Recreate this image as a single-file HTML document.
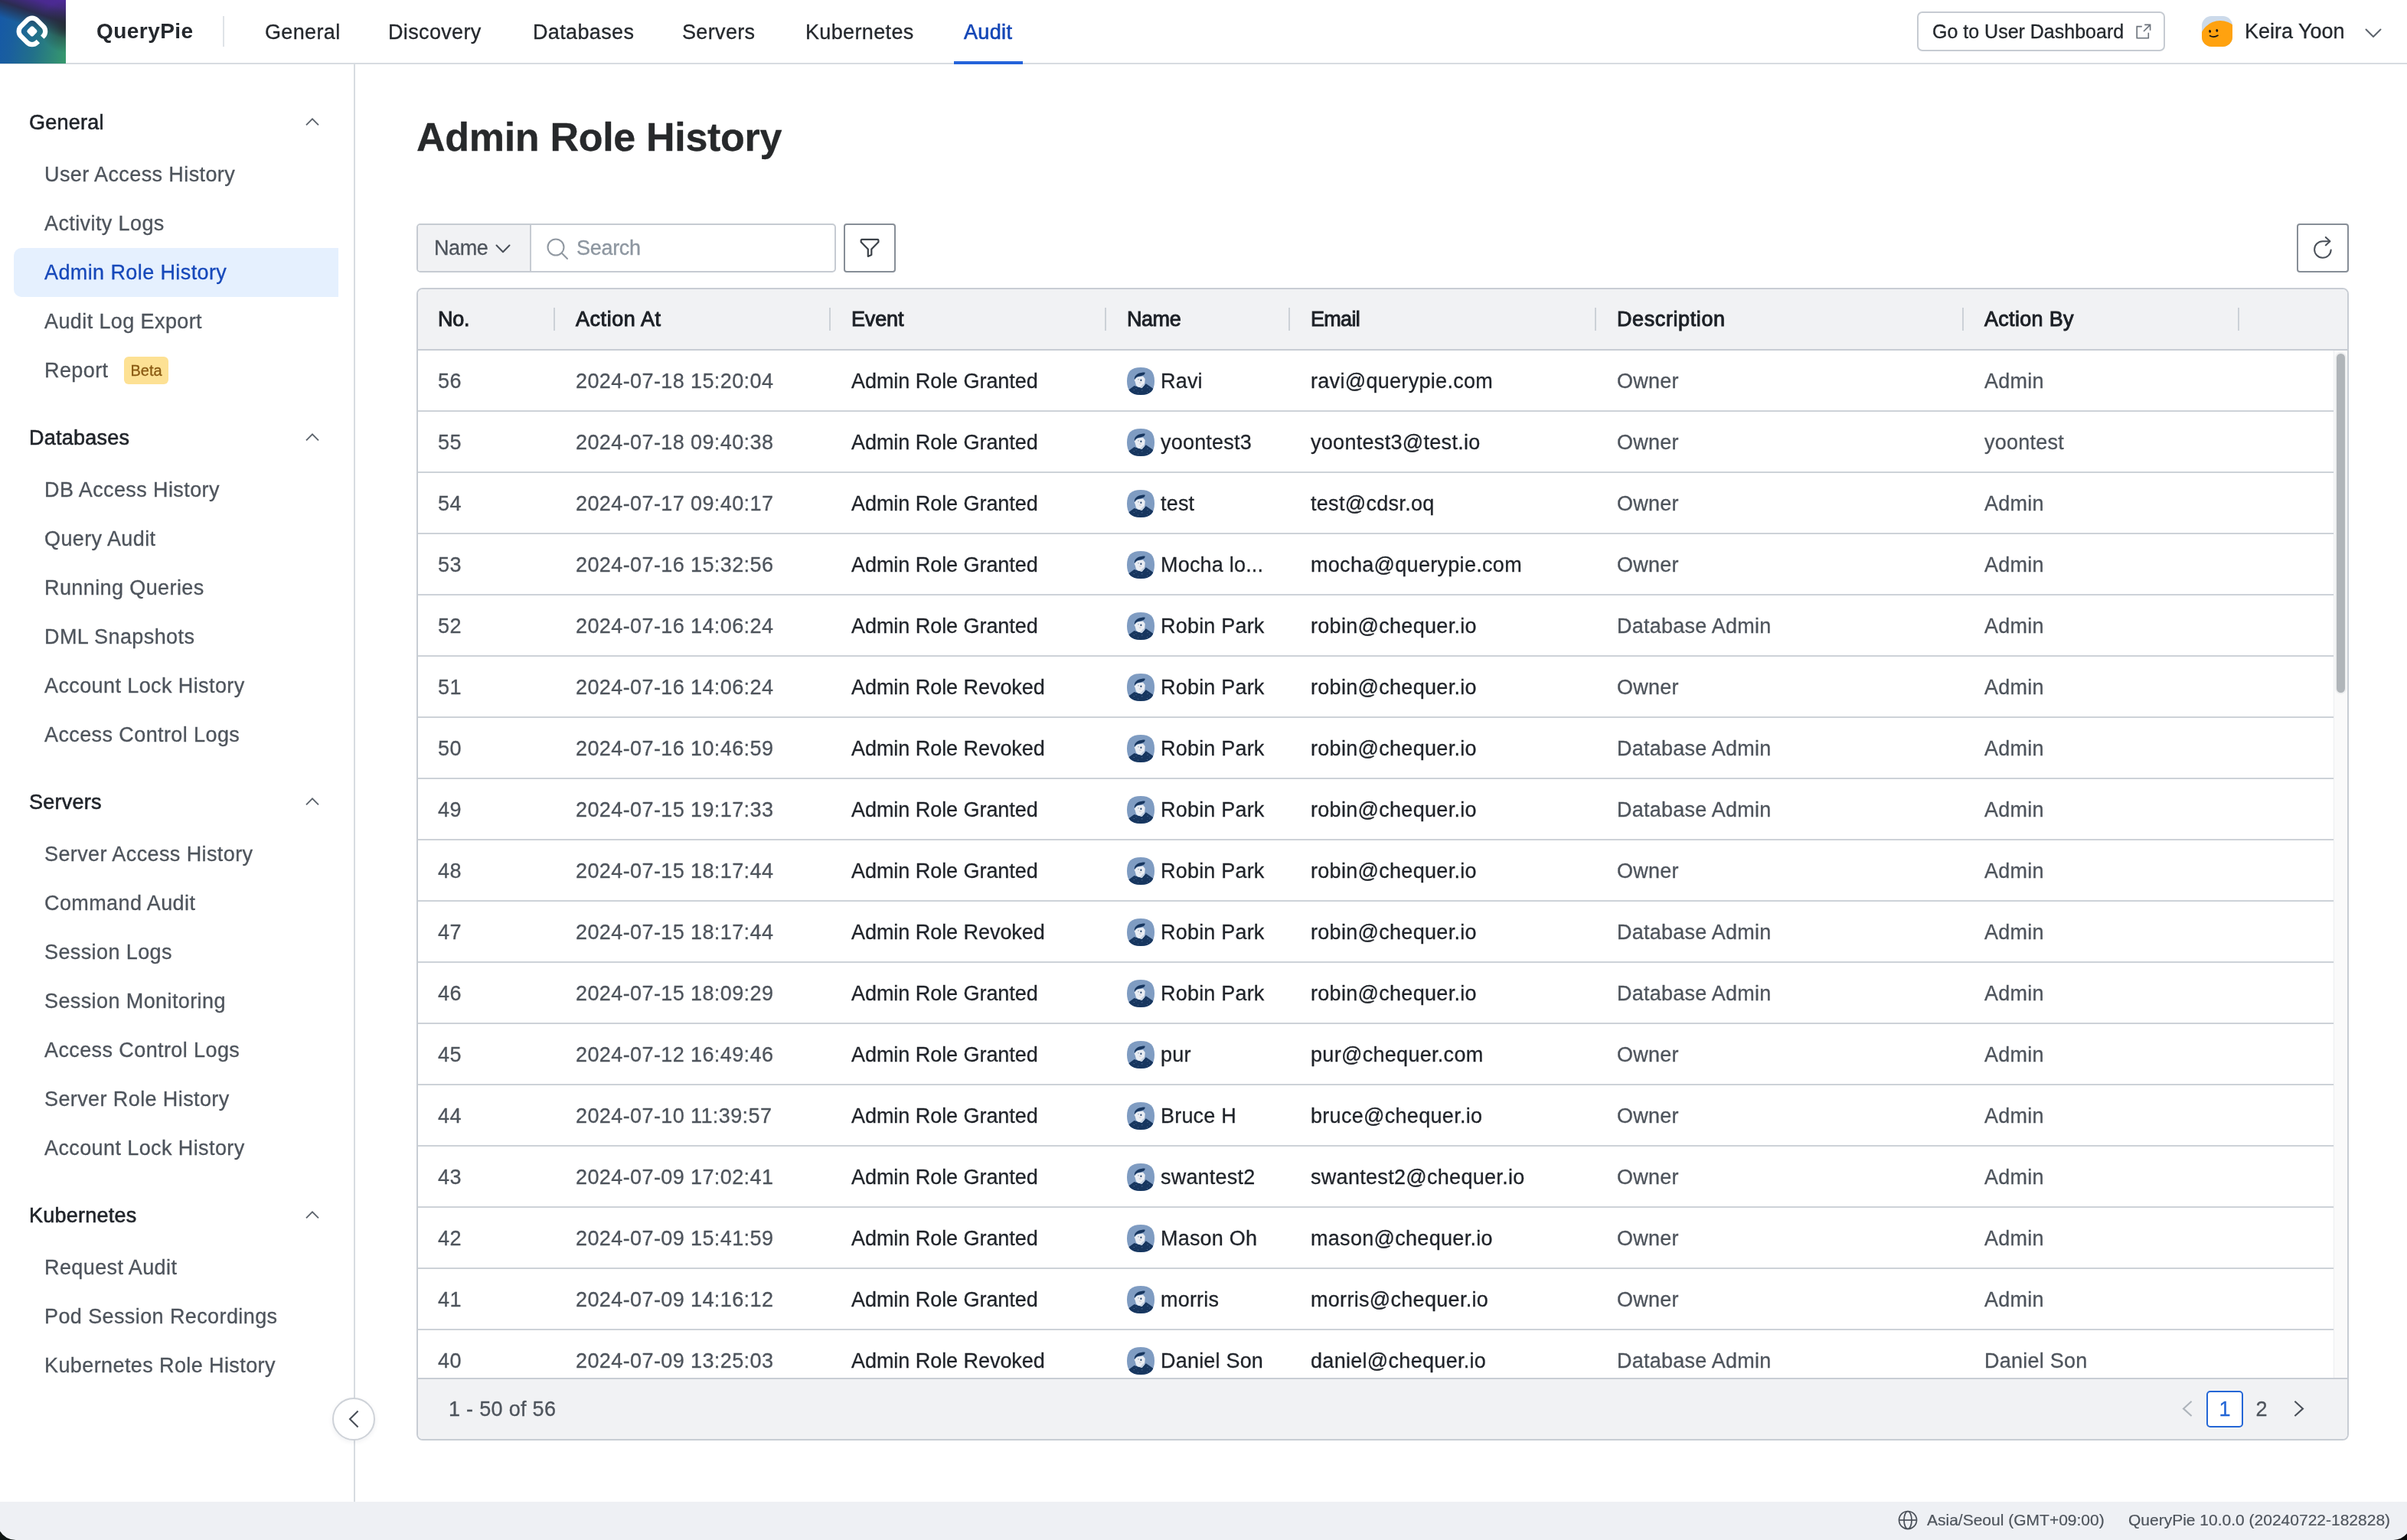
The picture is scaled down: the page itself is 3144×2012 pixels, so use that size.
<!DOCTYPE html>
<html lang="en"><head><meta charset="utf-8"><title>QueryPie - Admin Role History</title>
<style>
*{box-sizing:border-box;margin:0;padding:0}
html,body{width:3144px;height:2012px;overflow:hidden;background:#fff}
body{position:relative;font-family:"Liberation Sans",Arial,sans-serif;font-size:27px;color:#1f2329;-webkit-font-smoothing:antialiased;-webkit-text-stroke:.3px}
.abs{position:absolute}
svg{display:block}
/* header */
#app{position:absolute;left:0;top:0;width:3144px;height:2012px;will-change:transform}
#hdr{position:absolute;left:0;top:0;width:3144px;height:84px;border-bottom:2px solid #d7dce1;background:#fff}
#logo{position:absolute;left:0;top:0;width:86px;height:83px;background:radial-gradient(circle at 100% 42%,rgba(36,44,48,.85) 0,rgba(36,44,48,.45) 14px,rgba(36,44,48,0) 34px),linear-gradient(199deg,#4e2a98 0%,#4a2a90 11%,#2b2c50 27%,rgba(38,48,80,.75) 33%,rgba(30,70,120,0) 46%),linear-gradient(100deg,#1558a8 0%,#1a5f9e 25%,#22708a 55%,#37996c 100%)}
#brand{position:absolute;left:126px;top:0;height:82px;line-height:82px;font-size:28px;font-weight:700;color:#24282d;letter-spacing:.45px;-webkit-text-stroke:0}
#vdiv{position:absolute;left:291px;top:21px;width:2px;height:40px;background:#dfe3e8}
.nav{position:absolute;top:0;height:82px;line-height:84px;font-size:27px;color:#24282d;letter-spacing:.35px;white-space:nowrap}
.nav.on{color:#1346b6;-webkit-text-stroke:.6px #1346b6}
#uline{position:absolute;left:1246px;top:80px;width:90px;height:4px;background:#2463da}
#dash{position:absolute;left:2504px;top:15px;width:324px;height:52px;border:2px solid #c6cbd2;border-radius:7px;background:#fff}
#dash span{position:absolute;left:18px;top:0;line-height:48px;font-size:25px;letter-spacing:0;color:#24282d;white-space:nowrap}
#uname{position:absolute;left:2932px;top:0;line-height:83px;font-size:27px;letter-spacing:0;color:#24282d;white-space:nowrap}
/* sidebar */
#side{position:absolute;left:0;top:84px;width:464px;height:1878px;border-right:2px solid #d7dce1;background:#fff}
.sh{position:absolute;left:38px;height:72px;line-height:72px;font-size:27px;color:#1f2329;letter-spacing:.25px;-webkit-text-stroke:.6px #1f2329;white-space:nowrap}
.si{position:absolute;left:18px;width:424px;height:64px;line-height:64px;padding-left:40px;font-size:27px;color:#4e545c;letter-spacing:.4px;white-space:nowrap;border-radius:10px 0 0 10px}
.si.on{background:#e5f0fe;color:#1648ba}
.chev{position:absolute;left:398px}
#beta{position:absolute;left:162px;top:382px;width:58px;height:36px;border-radius:6px;background:#fde194;color:#8a5a12;font-size:20px;line-height:36px;text-align:center;letter-spacing:0}
#collapse{position:absolute;left:434px;top:1826px;width:56px;height:56px;border-radius:50%;border:2px solid #ced2d8;background:#fff;box-shadow:0 2px 6px rgba(20,30,50,.07)}
/* main */
#title{position:absolute;left:544px;top:147px;line-height:64px;font-size:52px;font-weight:700;color:#27292b;letter-spacing:-.3px;white-space:nowrap}
#srch{position:absolute;left:544px;top:292px;width:548px;height:64px;border:2px solid #c6cbd2;border-radius:5px;background:#fff;overflow:hidden}
#srch .sel{position:absolute;left:0;top:0;width:148px;height:60px;background:#f1f2f4;border-right:2px solid #c6cbd2}
#srch .sel span{position:absolute;left:21px;top:0;line-height:60px;font-size:27px;color:#4e545c;letter-spacing:-.4px}
#srch .ph{position:absolute;left:207px;top:0;line-height:60px;font-size:27px;color:#8d96a0;letter-spacing:-.3px}
.ibtn{position:absolute;top:292px;width:68px;height:64px;border:2px solid #878e97;border-radius:4px;background:#fff}
/* table */
#tbl{position:absolute;left:544px;top:376px;width:2524px;height:1506px;border:2px solid #c8cdd4;border-radius:8px;background:#fff;overflow:hidden}
#th{position:absolute;left:0;top:0;width:2520px;height:80px;background:#f1f2f4;border-bottom:2px solid #c8cdd4}
.hc{position:absolute;top:0;line-height:78px;font-size:27px;font-weight:400;color:#1c2026;letter-spacing:.15px;-webkit-text-stroke:.95px #1c2026;white-space:nowrap}
.hs{position:absolute;top:24px;width:2px;height:30px;background:#ccd1d7}
.tr{position:absolute;left:0;width:2502px;height:80px;border-bottom:2px solid #cdd2d8}
.tr span{position:absolute;top:0;line-height:80px;white-space:nowrap;font-size:27px}
.c1{left:26px;color:#4e545c;letter-spacing:.4px}
.c2{left:206px;color:#4e545c;letter-spacing:.4px}
.c3{left:566px;color:#1f2329;letter-spacing:-.05px}
.c4{left:970px;color:#1f2329;letter-spacing:.2px}
.c5{left:1166px;color:#1f2329;letter-spacing:.3px}
.c6{left:1566px;color:#4e545c;letter-spacing:.25px}
.c7{left:2046px;color:#4e545c;letter-spacing:.25px}
.av{position:absolute;left:926px;top:22px}
#sbar{position:absolute;left:2502px;top:80px;width:18px;height:1344px;background:#fafafa;border-left:1px solid #eceef0}
#thumb{position:absolute;left:3px;top:4px;width:11px;height:443px;border-radius:6px;background:#b0b5b9;box-shadow:0 0 0 2px #eeeff0}
#tf{position:absolute;left:0;top:1422px;width:2520px;height:80px;background:#f1f2f4;border-top:2px solid #c8cdd4}
#tf .cnt{position:absolute;left:40px;top:0;line-height:79px;font-size:27px;color:#4e545c;letter-spacing:.3px;white-space:nowrap}
#pg1{position:absolute;left:2336px;top:15px;width:48px;height:48px;border:2px solid #2466d6;border-radius:5px;background:#fff;color:#2466d6;text-align:center;line-height:45px;font-size:27px}
#pg2{position:absolute;left:2384px;top:15px;width:48px;height:48px;color:#4e545c;text-align:center;line-height:49px;font-size:27px}
/* status bar */
#stat{position:absolute;left:0;top:1962px;width:3144px;height:50px;background:#eef0f4}
#stat span{position:absolute;top:0;line-height:48px;font-size:21px;color:#4e545c;letter-spacing:0;-webkit-text-stroke:.2px;white-space:nowrap}
.corner{position:absolute;top:1996px;width:24px;height:16px}
</style></head><body><div id="app">
<svg width="0" height="0" style="position:absolute"><defs><clipPath id="sq"><path d="M18 0C30.5 0 36 5.5 36 18S30.5 36 18 36 0 30.5 0 18 5.5 0 18 0Z"/></clipPath><clipPath id="sq40"><rect width="40" height="40" rx="12.5"/></clipPath></defs></svg>

<div id="hdr">
<div id="logo"><svg width="86" height="83" viewBox="0 0 86 83"><g transform="translate(41.9 40.9) rotate(45)" fill="none" stroke="#fff" stroke-width="6.2"><path d="M14.85 3.6 V5.85 A9 9 0 0 1 5.85 14.85 H-5.85 A9 9 0 0 1 -14.85 5.85 V-5.85 A9 9 0 0 1 -5.85 -14.85 H5.85 A9 9 0 0 1 14.85 -5.85 V-4"/><rect x="-5.4" y="-5.4" width="10.8" height="10.8" rx="2.6" fill="#fff" stroke="none"/></g></svg></div>
<div id="brand">QueryPie</div><div id="vdiv"></div>
<div class="nav" style="left:346px">General</div>
<div class="nav" style="left:507px">Discovery</div>
<div class="nav" style="left:696px">Databases</div>
<div class="nav" style="left:891px">Servers</div>
<div class="nav" style="left:1052px">Kubernetes</div>
<div class="nav on" style="left:1259px">Audit</div><div id="uline"></div>
<div id="dash"><span>Go to User Dashboard</span><svg class="abs" style="left:282px;top:13px" width="22" height="22" viewBox="0 0 22 22" fill="none" stroke="#6b727b" stroke-width="1.6" stroke-linecap="butt" stroke-linejoin="miter"><path d="M9.8 4.6H3.2v15.1h15.1v-6.9"/><path d="M13.2 2.4h7.4v7.4M20.4 2.6 12 11"/></svg></div>
<svg class="abs" style="left:2876px;top:21px" width="40" height="40" viewBox="0 0 40 40"><g clip-path="url(#sq40)"><rect width="40" height="40" fill="#ccdaea"/><circle cx="24" cy="33" r="27" fill="#ffa20f"/><ellipse cx="10.6" cy="19.9" rx="1.45" ry="1.9" fill="#151515" transform="rotate(-12 10.6 19.9)"/><ellipse cx="19.8" cy="18.9" rx="1.45" ry="1.9" fill="#151515" transform="rotate(-12 19.8 18.9)"/><path d="M10.6 25.7Q15.5 28.6 21 25.3" fill="none" stroke="#151515" stroke-width="1.7" stroke-linecap="round"/></g></svg>
<div id="uname">Keira Yoon</div>
<svg class="abs" style="left:3088px;top:35px" width="24" height="16" viewBox="0 0 24 16" fill="none" stroke="#5d646d" stroke-width="2" stroke-linecap="round" stroke-linejoin="round"><path d="M2.5 3.5 12 13l9.5-9.5"/></svg>
</div>
<div id="side">
<div class="sh" style="top:40px">General</div>
<svg class="chev" style="top:69px" width="20" height="12" viewBox="0 0 20 12" fill="none" stroke="#5d646d" stroke-width="1.9" stroke-linecap="butt" stroke-linejoin="miter"><path d="M2 10.4 10 2.4l8 8"/></svg>
<div class="si" style="top:112px">User Access History</div>
<div class="si" style="top:176px">Activity Logs</div>
<div class="si on" style="top:240px">Admin Role History</div>
<div class="si" style="top:304px">Audit Log Export</div>
<div class="si" style="top:368px">Report</div>
<div class="sh" style="top:452px">Databases</div>
<svg class="chev" style="top:481px" width="20" height="12" viewBox="0 0 20 12" fill="none" stroke="#5d646d" stroke-width="1.9" stroke-linecap="butt" stroke-linejoin="miter"><path d="M2 10.4 10 2.4l8 8"/></svg>
<div class="si" style="top:524px">DB Access History</div>
<div class="si" style="top:588px">Query Audit</div>
<div class="si" style="top:652px">Running Queries</div>
<div class="si" style="top:716px">DML Snapshots</div>
<div class="si" style="top:780px">Account Lock History</div>
<div class="si" style="top:844px">Access Control Logs</div>
<div class="sh" style="top:928px">Servers</div>
<svg class="chev" style="top:957px" width="20" height="12" viewBox="0 0 20 12" fill="none" stroke="#5d646d" stroke-width="1.9" stroke-linecap="butt" stroke-linejoin="miter"><path d="M2 10.4 10 2.4l8 8"/></svg>
<div class="si" style="top:1000px">Server Access History</div>
<div class="si" style="top:1064px">Command Audit</div>
<div class="si" style="top:1128px">Session Logs</div>
<div class="si" style="top:1192px">Session Monitoring</div>
<div class="si" style="top:1256px">Access Control Logs</div>
<div class="si" style="top:1320px">Server Role History</div>
<div class="si" style="top:1384px">Account Lock History</div>
<div class="sh" style="top:1468px">Kubernetes</div>
<svg class="chev" style="top:1497px" width="20" height="12" viewBox="0 0 20 12" fill="none" stroke="#5d646d" stroke-width="1.9" stroke-linecap="butt" stroke-linejoin="miter"><path d="M2 10.4 10 2.4l8 8"/></svg>
<div class="si" style="top:1540px">Request Audit</div>
<div class="si" style="top:1604px">Pod Session Recordings</div>
<div class="si" style="top:1668px">Kubernetes Role History</div>
<div id="beta">Beta</div>
</div>
<div id="collapse"><svg class="abs" style="left:17px;top:14px" width="18" height="24" viewBox="0 0 18 24" fill="none" stroke="#4a5059" stroke-width="2.1" stroke-linecap="butt" stroke-linejoin="miter"><path d="M14.6 1.6 4 12l10.6 10.4"/></svg></div>
<div id="title">Admin Role History</div>
<div id="srch"><div class="sel"><span>Name</span><svg class="abs" style="left:100px;top:23px" width="24" height="16" viewBox="0 0 24 16" fill="none" stroke="#4a5059" stroke-width="2" stroke-linecap="round" stroke-linejoin="round"><path d="M2.5 3.5 11 12.3l8.5-8.8"/></svg></div><svg class="abs" style="left:165px;top:14px" width="34" height="34" viewBox="0 0 34 34" fill="none" stroke="#9098a1" stroke-width="2" stroke-linecap="round"><circle cx="15" cy="15" r="10.5"/><path d="M22.8 22.8 30 30"/></svg><span class="ph">Search</span></div>
<div class="ibtn" style="left:1102px"><svg class="abs" style="left:18px;top:17px" width="28" height="28" viewBox="0 0 28 28" fill="none" stroke="#3c4249" stroke-width="2.2" stroke-linejoin="round" stroke-linecap="round"><path d="M3.7 1.9H24.4a1 1 0 0 1 1 1V5.2L16.3 14.4V21.9L11.8 23.9V14.4L2.7 5.2V2.9a1 1 0 0 1 1-1Z"/></svg></div>
<div class="ibtn" style="left:3000px"><svg class="abs" style="left:18px;top:15px" width="30" height="30" viewBox="0 0 30 30" fill="none" stroke="#4a5059" stroke-width="2" stroke-linecap="round" stroke-linejoin="round"><path d="M24.7 17.4A10.8 10.8 0 1 1 13.9 6.2H23"/><path d="M17.8.9 23.4 6.2 17.8 11.4"/></svg></div>
<div id="tbl"><div id="th">
<div class="hc" style="left:26px;letter-spacing:-0.2px">No.</div>
<div class="hs" style="left:177px"></div>
<div class="hc" style="left:206px;letter-spacing:0.55px">Action At</div>
<div class="hs" style="left:537px"></div>
<div class="hc" style="left:566px;letter-spacing:-0.15px">Event</div>
<div class="hs" style="left:897px"></div>
<div class="hc" style="left:926px;letter-spacing:-0.45px">Name</div>
<div class="hs" style="left:1137px"></div>
<div class="hc" style="left:1166px;letter-spacing:-0.7px">Email</div>
<div class="hs" style="left:1537px"></div>
<div class="hc" style="left:1566px;letter-spacing:0.6px">Description</div>
<div class="hs" style="left:2017px"></div>
<div class="hc" style="left:2046px;letter-spacing:0.3px">Action By</div>
<div class="hs" style="left:2377px"></div>
</div>
<div class="tr" style="top:80px"><span class="c1">56</span><span class="c2">2024-07-18 15:20:04</span><span class="c3">Admin Role Granted</span><svg class="av" viewBox="0 0 36 36" width="36" height="36"><g clip-path="url(#sq)"><rect width="36" height="36" fill="#7f9cc2"/><path d="M-1 36 L-1 31.5 L3.7 28.3 L9.6 24 L14 25.6 L19.6 26.8 L24.9 21.3 L33.6 27.3 L37 30 L37 36Z" fill="#17365f"/><path d="M11 14.4 L9.6 16.6 L10.6 18.6 L12 23.4 L14.3 25.6 L19.6 26.8 L22.4 23.5 L23.2 20.4 L23.7 15 L21 11.6 L14.3 12.6Z" fill="#e9edf3"/><path d="M19.8 26.7 L22.4 23.5 L23.2 20.6 L20.6 22.2 L18.6 24.6 L16.5 26Z" fill="#c3cfdf"/><path d="M9.9 15.4 C9.4 11.8 12.4 8.6 17 7.3 C20 6.5 23.4 6.2 23.7 6.9 C23.4 8.6 22.4 9.8 20.4 10.6 C17.4 11.6 13.4 11.8 12 13.2 C11.2 14 10.7 15 10.4 15.8Z" fill="#17365f"/><ellipse cx="18.4" cy="16.7" rx="1" ry="1.2" fill="#1d3d68"/><ellipse cx="15" cy="15.7" rx=".7" ry=".5" fill="#50627f"/><path d="M15.9 19.7q1.3 1 2.6.1" fill="none" stroke="#b9a9ad" stroke-width=".7"/><g fill="#5f7ba3"><circle cx="9.2" cy="29.5" r=".55"/><circle cx="12" cy="27.8" r=".5"/><circle cx="19.8" cy="29.8" r=".6"/><circle cx="27" cy="26.3" r=".55"/><circle cx="14.6" cy="33" r=".5"/><circle cx="26.6" cy="32.6" r=".5"/><circle cx="29.6" cy="29" r=".45"/></g></g></svg><span class="c4">Ravi</span><span class="c5">ravi@querypie.com</span><span class="c6">Owner</span><span class="c7">Admin</span></div>
<div class="tr" style="top:160px"><span class="c1">55</span><span class="c2">2024-07-18 09:40:38</span><span class="c3">Admin Role Granted</span><svg class="av" viewBox="0 0 36 36" width="36" height="36"><g clip-path="url(#sq)"><rect width="36" height="36" fill="#7f9cc2"/><path d="M-1 36 L-1 31.5 L3.7 28.3 L9.6 24 L14 25.6 L19.6 26.8 L24.9 21.3 L33.6 27.3 L37 30 L37 36Z" fill="#17365f"/><path d="M11 14.4 L9.6 16.6 L10.6 18.6 L12 23.4 L14.3 25.6 L19.6 26.8 L22.4 23.5 L23.2 20.4 L23.7 15 L21 11.6 L14.3 12.6Z" fill="#e9edf3"/><path d="M19.8 26.7 L22.4 23.5 L23.2 20.6 L20.6 22.2 L18.6 24.6 L16.5 26Z" fill="#c3cfdf"/><path d="M9.9 15.4 C9.4 11.8 12.4 8.6 17 7.3 C20 6.5 23.4 6.2 23.7 6.9 C23.4 8.6 22.4 9.8 20.4 10.6 C17.4 11.6 13.4 11.8 12 13.2 C11.2 14 10.7 15 10.4 15.8Z" fill="#17365f"/><ellipse cx="18.4" cy="16.7" rx="1" ry="1.2" fill="#1d3d68"/><ellipse cx="15" cy="15.7" rx=".7" ry=".5" fill="#50627f"/><path d="M15.9 19.7q1.3 1 2.6.1" fill="none" stroke="#b9a9ad" stroke-width=".7"/><g fill="#5f7ba3"><circle cx="9.2" cy="29.5" r=".55"/><circle cx="12" cy="27.8" r=".5"/><circle cx="19.8" cy="29.8" r=".6"/><circle cx="27" cy="26.3" r=".55"/><circle cx="14.6" cy="33" r=".5"/><circle cx="26.6" cy="32.6" r=".5"/><circle cx="29.6" cy="29" r=".45"/></g></g></svg><span class="c4">yoontest3</span><span class="c5">yoontest3@test.io</span><span class="c6">Owner</span><span class="c7">yoontest</span></div>
<div class="tr" style="top:240px"><span class="c1">54</span><span class="c2">2024-07-17 09:40:17</span><span class="c3">Admin Role Granted</span><svg class="av" viewBox="0 0 36 36" width="36" height="36"><g clip-path="url(#sq)"><rect width="36" height="36" fill="#7f9cc2"/><path d="M-1 36 L-1 31.5 L3.7 28.3 L9.6 24 L14 25.6 L19.6 26.8 L24.9 21.3 L33.6 27.3 L37 30 L37 36Z" fill="#17365f"/><path d="M11 14.4 L9.6 16.6 L10.6 18.6 L12 23.4 L14.3 25.6 L19.6 26.8 L22.4 23.5 L23.2 20.4 L23.7 15 L21 11.6 L14.3 12.6Z" fill="#e9edf3"/><path d="M19.8 26.7 L22.4 23.5 L23.2 20.6 L20.6 22.2 L18.6 24.6 L16.5 26Z" fill="#c3cfdf"/><path d="M9.9 15.4 C9.4 11.8 12.4 8.6 17 7.3 C20 6.5 23.4 6.2 23.7 6.9 C23.4 8.6 22.4 9.8 20.4 10.6 C17.4 11.6 13.4 11.8 12 13.2 C11.2 14 10.7 15 10.4 15.8Z" fill="#17365f"/><ellipse cx="18.4" cy="16.7" rx="1" ry="1.2" fill="#1d3d68"/><ellipse cx="15" cy="15.7" rx=".7" ry=".5" fill="#50627f"/><path d="M15.9 19.7q1.3 1 2.6.1" fill="none" stroke="#b9a9ad" stroke-width=".7"/><g fill="#5f7ba3"><circle cx="9.2" cy="29.5" r=".55"/><circle cx="12" cy="27.8" r=".5"/><circle cx="19.8" cy="29.8" r=".6"/><circle cx="27" cy="26.3" r=".55"/><circle cx="14.6" cy="33" r=".5"/><circle cx="26.6" cy="32.6" r=".5"/><circle cx="29.6" cy="29" r=".45"/></g></g></svg><span class="c4">test</span><span class="c5">test@cdsr.oq</span><span class="c6">Owner</span><span class="c7">Admin</span></div>
<div class="tr" style="top:320px"><span class="c1">53</span><span class="c2">2024-07-16 15:32:56</span><span class="c3">Admin Role Granted</span><svg class="av" viewBox="0 0 36 36" width="36" height="36"><g clip-path="url(#sq)"><rect width="36" height="36" fill="#7f9cc2"/><path d="M-1 36 L-1 31.5 L3.7 28.3 L9.6 24 L14 25.6 L19.6 26.8 L24.9 21.3 L33.6 27.3 L37 30 L37 36Z" fill="#17365f"/><path d="M11 14.4 L9.6 16.6 L10.6 18.6 L12 23.4 L14.3 25.6 L19.6 26.8 L22.4 23.5 L23.2 20.4 L23.7 15 L21 11.6 L14.3 12.6Z" fill="#e9edf3"/><path d="M19.8 26.7 L22.4 23.5 L23.2 20.6 L20.6 22.2 L18.6 24.6 L16.5 26Z" fill="#c3cfdf"/><path d="M9.9 15.4 C9.4 11.8 12.4 8.6 17 7.3 C20 6.5 23.4 6.2 23.7 6.9 C23.4 8.6 22.4 9.8 20.4 10.6 C17.4 11.6 13.4 11.8 12 13.2 C11.2 14 10.7 15 10.4 15.8Z" fill="#17365f"/><ellipse cx="18.4" cy="16.7" rx="1" ry="1.2" fill="#1d3d68"/><ellipse cx="15" cy="15.7" rx=".7" ry=".5" fill="#50627f"/><path d="M15.9 19.7q1.3 1 2.6.1" fill="none" stroke="#b9a9ad" stroke-width=".7"/><g fill="#5f7ba3"><circle cx="9.2" cy="29.5" r=".55"/><circle cx="12" cy="27.8" r=".5"/><circle cx="19.8" cy="29.8" r=".6"/><circle cx="27" cy="26.3" r=".55"/><circle cx="14.6" cy="33" r=".5"/><circle cx="26.6" cy="32.6" r=".5"/><circle cx="29.6" cy="29" r=".45"/></g></g></svg><span class="c4">Mocha lo...</span><span class="c5">mocha@querypie.com</span><span class="c6">Owner</span><span class="c7">Admin</span></div>
<div class="tr" style="top:400px"><span class="c1">52</span><span class="c2">2024-07-16 14:06:24</span><span class="c3">Admin Role Granted</span><svg class="av" viewBox="0 0 36 36" width="36" height="36"><g clip-path="url(#sq)"><rect width="36" height="36" fill="#7f9cc2"/><path d="M-1 36 L-1 31.5 L3.7 28.3 L9.6 24 L14 25.6 L19.6 26.8 L24.9 21.3 L33.6 27.3 L37 30 L37 36Z" fill="#17365f"/><path d="M11 14.4 L9.6 16.6 L10.6 18.6 L12 23.4 L14.3 25.6 L19.6 26.8 L22.4 23.5 L23.2 20.4 L23.7 15 L21 11.6 L14.3 12.6Z" fill="#e9edf3"/><path d="M19.8 26.7 L22.4 23.5 L23.2 20.6 L20.6 22.2 L18.6 24.6 L16.5 26Z" fill="#c3cfdf"/><path d="M9.9 15.4 C9.4 11.8 12.4 8.6 17 7.3 C20 6.5 23.4 6.2 23.7 6.9 C23.4 8.6 22.4 9.8 20.4 10.6 C17.4 11.6 13.4 11.8 12 13.2 C11.2 14 10.7 15 10.4 15.8Z" fill="#17365f"/><ellipse cx="18.4" cy="16.7" rx="1" ry="1.2" fill="#1d3d68"/><ellipse cx="15" cy="15.7" rx=".7" ry=".5" fill="#50627f"/><path d="M15.9 19.7q1.3 1 2.6.1" fill="none" stroke="#b9a9ad" stroke-width=".7"/><g fill="#5f7ba3"><circle cx="9.2" cy="29.5" r=".55"/><circle cx="12" cy="27.8" r=".5"/><circle cx="19.8" cy="29.8" r=".6"/><circle cx="27" cy="26.3" r=".55"/><circle cx="14.6" cy="33" r=".5"/><circle cx="26.6" cy="32.6" r=".5"/><circle cx="29.6" cy="29" r=".45"/></g></g></svg><span class="c4">Robin Park</span><span class="c5">robin@chequer.io</span><span class="c6">Database Admin</span><span class="c7">Admin</span></div>
<div class="tr" style="top:480px"><span class="c1">51</span><span class="c2">2024-07-16 14:06:24</span><span class="c3">Admin Role Revoked</span><svg class="av" viewBox="0 0 36 36" width="36" height="36"><g clip-path="url(#sq)"><rect width="36" height="36" fill="#7f9cc2"/><path d="M-1 36 L-1 31.5 L3.7 28.3 L9.6 24 L14 25.6 L19.6 26.8 L24.9 21.3 L33.6 27.3 L37 30 L37 36Z" fill="#17365f"/><path d="M11 14.4 L9.6 16.6 L10.6 18.6 L12 23.4 L14.3 25.6 L19.6 26.8 L22.4 23.5 L23.2 20.4 L23.7 15 L21 11.6 L14.3 12.6Z" fill="#e9edf3"/><path d="M19.8 26.7 L22.4 23.5 L23.2 20.6 L20.6 22.2 L18.6 24.6 L16.5 26Z" fill="#c3cfdf"/><path d="M9.9 15.4 C9.4 11.8 12.4 8.6 17 7.3 C20 6.5 23.4 6.2 23.7 6.9 C23.4 8.6 22.4 9.8 20.4 10.6 C17.4 11.6 13.4 11.8 12 13.2 C11.2 14 10.7 15 10.4 15.8Z" fill="#17365f"/><ellipse cx="18.4" cy="16.7" rx="1" ry="1.2" fill="#1d3d68"/><ellipse cx="15" cy="15.7" rx=".7" ry=".5" fill="#50627f"/><path d="M15.9 19.7q1.3 1 2.6.1" fill="none" stroke="#b9a9ad" stroke-width=".7"/><g fill="#5f7ba3"><circle cx="9.2" cy="29.5" r=".55"/><circle cx="12" cy="27.8" r=".5"/><circle cx="19.8" cy="29.8" r=".6"/><circle cx="27" cy="26.3" r=".55"/><circle cx="14.6" cy="33" r=".5"/><circle cx="26.6" cy="32.6" r=".5"/><circle cx="29.6" cy="29" r=".45"/></g></g></svg><span class="c4">Robin Park</span><span class="c5">robin@chequer.io</span><span class="c6">Owner</span><span class="c7">Admin</span></div>
<div class="tr" style="top:560px"><span class="c1">50</span><span class="c2">2024-07-16 10:46:59</span><span class="c3">Admin Role Revoked</span><svg class="av" viewBox="0 0 36 36" width="36" height="36"><g clip-path="url(#sq)"><rect width="36" height="36" fill="#7f9cc2"/><path d="M-1 36 L-1 31.5 L3.7 28.3 L9.6 24 L14 25.6 L19.6 26.8 L24.9 21.3 L33.6 27.3 L37 30 L37 36Z" fill="#17365f"/><path d="M11 14.4 L9.6 16.6 L10.6 18.6 L12 23.4 L14.3 25.6 L19.6 26.8 L22.4 23.5 L23.2 20.4 L23.7 15 L21 11.6 L14.3 12.6Z" fill="#e9edf3"/><path d="M19.8 26.7 L22.4 23.5 L23.2 20.6 L20.6 22.2 L18.6 24.6 L16.5 26Z" fill="#c3cfdf"/><path d="M9.9 15.4 C9.4 11.8 12.4 8.6 17 7.3 C20 6.5 23.4 6.2 23.7 6.9 C23.4 8.6 22.4 9.8 20.4 10.6 C17.4 11.6 13.4 11.8 12 13.2 C11.2 14 10.7 15 10.4 15.8Z" fill="#17365f"/><ellipse cx="18.4" cy="16.7" rx="1" ry="1.2" fill="#1d3d68"/><ellipse cx="15" cy="15.7" rx=".7" ry=".5" fill="#50627f"/><path d="M15.9 19.7q1.3 1 2.6.1" fill="none" stroke="#b9a9ad" stroke-width=".7"/><g fill="#5f7ba3"><circle cx="9.2" cy="29.5" r=".55"/><circle cx="12" cy="27.8" r=".5"/><circle cx="19.8" cy="29.8" r=".6"/><circle cx="27" cy="26.3" r=".55"/><circle cx="14.6" cy="33" r=".5"/><circle cx="26.6" cy="32.6" r=".5"/><circle cx="29.6" cy="29" r=".45"/></g></g></svg><span class="c4">Robin Park</span><span class="c5">robin@chequer.io</span><span class="c6">Database Admin</span><span class="c7">Admin</span></div>
<div class="tr" style="top:640px"><span class="c1">49</span><span class="c2">2024-07-15 19:17:33</span><span class="c3">Admin Role Granted</span><svg class="av" viewBox="0 0 36 36" width="36" height="36"><g clip-path="url(#sq)"><rect width="36" height="36" fill="#7f9cc2"/><path d="M-1 36 L-1 31.5 L3.7 28.3 L9.6 24 L14 25.6 L19.6 26.8 L24.9 21.3 L33.6 27.3 L37 30 L37 36Z" fill="#17365f"/><path d="M11 14.4 L9.6 16.6 L10.6 18.6 L12 23.4 L14.3 25.6 L19.6 26.8 L22.4 23.5 L23.2 20.4 L23.7 15 L21 11.6 L14.3 12.6Z" fill="#e9edf3"/><path d="M19.8 26.7 L22.4 23.5 L23.2 20.6 L20.6 22.2 L18.6 24.6 L16.5 26Z" fill="#c3cfdf"/><path d="M9.9 15.4 C9.4 11.8 12.4 8.6 17 7.3 C20 6.5 23.4 6.2 23.7 6.9 C23.4 8.6 22.4 9.8 20.4 10.6 C17.4 11.6 13.4 11.8 12 13.2 C11.2 14 10.7 15 10.4 15.8Z" fill="#17365f"/><ellipse cx="18.4" cy="16.7" rx="1" ry="1.2" fill="#1d3d68"/><ellipse cx="15" cy="15.7" rx=".7" ry=".5" fill="#50627f"/><path d="M15.9 19.7q1.3 1 2.6.1" fill="none" stroke="#b9a9ad" stroke-width=".7"/><g fill="#5f7ba3"><circle cx="9.2" cy="29.5" r=".55"/><circle cx="12" cy="27.8" r=".5"/><circle cx="19.8" cy="29.8" r=".6"/><circle cx="27" cy="26.3" r=".55"/><circle cx="14.6" cy="33" r=".5"/><circle cx="26.6" cy="32.6" r=".5"/><circle cx="29.6" cy="29" r=".45"/></g></g></svg><span class="c4">Robin Park</span><span class="c5">robin@chequer.io</span><span class="c6">Database Admin</span><span class="c7">Admin</span></div>
<div class="tr" style="top:720px"><span class="c1">48</span><span class="c2">2024-07-15 18:17:44</span><span class="c3">Admin Role Granted</span><svg class="av" viewBox="0 0 36 36" width="36" height="36"><g clip-path="url(#sq)"><rect width="36" height="36" fill="#7f9cc2"/><path d="M-1 36 L-1 31.5 L3.7 28.3 L9.6 24 L14 25.6 L19.6 26.8 L24.9 21.3 L33.6 27.3 L37 30 L37 36Z" fill="#17365f"/><path d="M11 14.4 L9.6 16.6 L10.6 18.6 L12 23.4 L14.3 25.6 L19.6 26.8 L22.4 23.5 L23.2 20.4 L23.7 15 L21 11.6 L14.3 12.6Z" fill="#e9edf3"/><path d="M19.8 26.7 L22.4 23.5 L23.2 20.6 L20.6 22.2 L18.6 24.6 L16.5 26Z" fill="#c3cfdf"/><path d="M9.9 15.4 C9.4 11.8 12.4 8.6 17 7.3 C20 6.5 23.4 6.2 23.7 6.9 C23.4 8.6 22.4 9.8 20.4 10.6 C17.4 11.6 13.4 11.8 12 13.2 C11.2 14 10.7 15 10.4 15.8Z" fill="#17365f"/><ellipse cx="18.4" cy="16.7" rx="1" ry="1.2" fill="#1d3d68"/><ellipse cx="15" cy="15.7" rx=".7" ry=".5" fill="#50627f"/><path d="M15.9 19.7q1.3 1 2.6.1" fill="none" stroke="#b9a9ad" stroke-width=".7"/><g fill="#5f7ba3"><circle cx="9.2" cy="29.5" r=".55"/><circle cx="12" cy="27.8" r=".5"/><circle cx="19.8" cy="29.8" r=".6"/><circle cx="27" cy="26.3" r=".55"/><circle cx="14.6" cy="33" r=".5"/><circle cx="26.6" cy="32.6" r=".5"/><circle cx="29.6" cy="29" r=".45"/></g></g></svg><span class="c4">Robin Park</span><span class="c5">robin@chequer.io</span><span class="c6">Owner</span><span class="c7">Admin</span></div>
<div class="tr" style="top:800px"><span class="c1">47</span><span class="c2">2024-07-15 18:17:44</span><span class="c3">Admin Role Revoked</span><svg class="av" viewBox="0 0 36 36" width="36" height="36"><g clip-path="url(#sq)"><rect width="36" height="36" fill="#7f9cc2"/><path d="M-1 36 L-1 31.5 L3.7 28.3 L9.6 24 L14 25.6 L19.6 26.8 L24.9 21.3 L33.6 27.3 L37 30 L37 36Z" fill="#17365f"/><path d="M11 14.4 L9.6 16.6 L10.6 18.6 L12 23.4 L14.3 25.6 L19.6 26.8 L22.4 23.5 L23.2 20.4 L23.7 15 L21 11.6 L14.3 12.6Z" fill="#e9edf3"/><path d="M19.8 26.7 L22.4 23.5 L23.2 20.6 L20.6 22.2 L18.6 24.6 L16.5 26Z" fill="#c3cfdf"/><path d="M9.9 15.4 C9.4 11.8 12.4 8.6 17 7.3 C20 6.5 23.4 6.2 23.7 6.9 C23.4 8.6 22.4 9.8 20.4 10.6 C17.4 11.6 13.4 11.8 12 13.2 C11.2 14 10.7 15 10.4 15.8Z" fill="#17365f"/><ellipse cx="18.4" cy="16.7" rx="1" ry="1.2" fill="#1d3d68"/><ellipse cx="15" cy="15.7" rx=".7" ry=".5" fill="#50627f"/><path d="M15.9 19.7q1.3 1 2.6.1" fill="none" stroke="#b9a9ad" stroke-width=".7"/><g fill="#5f7ba3"><circle cx="9.2" cy="29.5" r=".55"/><circle cx="12" cy="27.8" r=".5"/><circle cx="19.8" cy="29.8" r=".6"/><circle cx="27" cy="26.3" r=".55"/><circle cx="14.6" cy="33" r=".5"/><circle cx="26.6" cy="32.6" r=".5"/><circle cx="29.6" cy="29" r=".45"/></g></g></svg><span class="c4">Robin Park</span><span class="c5">robin@chequer.io</span><span class="c6">Database Admin</span><span class="c7">Admin</span></div>
<div class="tr" style="top:880px"><span class="c1">46</span><span class="c2">2024-07-15 18:09:29</span><span class="c3">Admin Role Granted</span><svg class="av" viewBox="0 0 36 36" width="36" height="36"><g clip-path="url(#sq)"><rect width="36" height="36" fill="#7f9cc2"/><path d="M-1 36 L-1 31.5 L3.7 28.3 L9.6 24 L14 25.6 L19.6 26.8 L24.9 21.3 L33.6 27.3 L37 30 L37 36Z" fill="#17365f"/><path d="M11 14.4 L9.6 16.6 L10.6 18.6 L12 23.4 L14.3 25.6 L19.6 26.8 L22.4 23.5 L23.2 20.4 L23.7 15 L21 11.6 L14.3 12.6Z" fill="#e9edf3"/><path d="M19.8 26.7 L22.4 23.5 L23.2 20.6 L20.6 22.2 L18.6 24.6 L16.5 26Z" fill="#c3cfdf"/><path d="M9.9 15.4 C9.4 11.8 12.4 8.6 17 7.3 C20 6.5 23.4 6.2 23.7 6.9 C23.4 8.6 22.4 9.8 20.4 10.6 C17.4 11.6 13.4 11.8 12 13.2 C11.2 14 10.7 15 10.4 15.8Z" fill="#17365f"/><ellipse cx="18.4" cy="16.7" rx="1" ry="1.2" fill="#1d3d68"/><ellipse cx="15" cy="15.7" rx=".7" ry=".5" fill="#50627f"/><path d="M15.9 19.7q1.3 1 2.6.1" fill="none" stroke="#b9a9ad" stroke-width=".7"/><g fill="#5f7ba3"><circle cx="9.2" cy="29.5" r=".55"/><circle cx="12" cy="27.8" r=".5"/><circle cx="19.8" cy="29.8" r=".6"/><circle cx="27" cy="26.3" r=".55"/><circle cx="14.6" cy="33" r=".5"/><circle cx="26.6" cy="32.6" r=".5"/><circle cx="29.6" cy="29" r=".45"/></g></g></svg><span class="c4">Robin Park</span><span class="c5">robin@chequer.io</span><span class="c6">Database Admin</span><span class="c7">Admin</span></div>
<div class="tr" style="top:960px"><span class="c1">45</span><span class="c2">2024-07-12 16:49:46</span><span class="c3">Admin Role Granted</span><svg class="av" viewBox="0 0 36 36" width="36" height="36"><g clip-path="url(#sq)"><rect width="36" height="36" fill="#7f9cc2"/><path d="M-1 36 L-1 31.5 L3.7 28.3 L9.6 24 L14 25.6 L19.6 26.8 L24.9 21.3 L33.6 27.3 L37 30 L37 36Z" fill="#17365f"/><path d="M11 14.4 L9.6 16.6 L10.6 18.6 L12 23.4 L14.3 25.6 L19.6 26.8 L22.4 23.5 L23.2 20.4 L23.7 15 L21 11.6 L14.3 12.6Z" fill="#e9edf3"/><path d="M19.8 26.7 L22.4 23.5 L23.2 20.6 L20.6 22.2 L18.6 24.6 L16.5 26Z" fill="#c3cfdf"/><path d="M9.9 15.4 C9.4 11.8 12.4 8.6 17 7.3 C20 6.5 23.4 6.2 23.7 6.9 C23.4 8.6 22.4 9.8 20.4 10.6 C17.4 11.6 13.4 11.8 12 13.2 C11.2 14 10.7 15 10.4 15.8Z" fill="#17365f"/><ellipse cx="18.4" cy="16.7" rx="1" ry="1.2" fill="#1d3d68"/><ellipse cx="15" cy="15.7" rx=".7" ry=".5" fill="#50627f"/><path d="M15.9 19.7q1.3 1 2.6.1" fill="none" stroke="#b9a9ad" stroke-width=".7"/><g fill="#5f7ba3"><circle cx="9.2" cy="29.5" r=".55"/><circle cx="12" cy="27.8" r=".5"/><circle cx="19.8" cy="29.8" r=".6"/><circle cx="27" cy="26.3" r=".55"/><circle cx="14.6" cy="33" r=".5"/><circle cx="26.6" cy="32.6" r=".5"/><circle cx="29.6" cy="29" r=".45"/></g></g></svg><span class="c4">pur</span><span class="c5">pur@chequer.com</span><span class="c6">Owner</span><span class="c7">Admin</span></div>
<div class="tr" style="top:1040px"><span class="c1">44</span><span class="c2">2024-07-10 11:39:57</span><span class="c3">Admin Role Granted</span><svg class="av" viewBox="0 0 36 36" width="36" height="36"><g clip-path="url(#sq)"><rect width="36" height="36" fill="#7f9cc2"/><path d="M-1 36 L-1 31.5 L3.7 28.3 L9.6 24 L14 25.6 L19.6 26.8 L24.9 21.3 L33.6 27.3 L37 30 L37 36Z" fill="#17365f"/><path d="M11 14.4 L9.6 16.6 L10.6 18.6 L12 23.4 L14.3 25.6 L19.6 26.8 L22.4 23.5 L23.2 20.4 L23.7 15 L21 11.6 L14.3 12.6Z" fill="#e9edf3"/><path d="M19.8 26.7 L22.4 23.5 L23.2 20.6 L20.6 22.2 L18.6 24.6 L16.5 26Z" fill="#c3cfdf"/><path d="M9.9 15.4 C9.4 11.8 12.4 8.6 17 7.3 C20 6.5 23.4 6.2 23.7 6.9 C23.4 8.6 22.4 9.8 20.4 10.6 C17.4 11.6 13.4 11.8 12 13.2 C11.2 14 10.7 15 10.4 15.8Z" fill="#17365f"/><ellipse cx="18.4" cy="16.7" rx="1" ry="1.2" fill="#1d3d68"/><ellipse cx="15" cy="15.7" rx=".7" ry=".5" fill="#50627f"/><path d="M15.9 19.7q1.3 1 2.6.1" fill="none" stroke="#b9a9ad" stroke-width=".7"/><g fill="#5f7ba3"><circle cx="9.2" cy="29.5" r=".55"/><circle cx="12" cy="27.8" r=".5"/><circle cx="19.8" cy="29.8" r=".6"/><circle cx="27" cy="26.3" r=".55"/><circle cx="14.6" cy="33" r=".5"/><circle cx="26.6" cy="32.6" r=".5"/><circle cx="29.6" cy="29" r=".45"/></g></g></svg><span class="c4">Bruce H</span><span class="c5">bruce@chequer.io</span><span class="c6">Owner</span><span class="c7">Admin</span></div>
<div class="tr" style="top:1120px"><span class="c1">43</span><span class="c2">2024-07-09 17:02:41</span><span class="c3">Admin Role Granted</span><svg class="av" viewBox="0 0 36 36" width="36" height="36"><g clip-path="url(#sq)"><rect width="36" height="36" fill="#7f9cc2"/><path d="M-1 36 L-1 31.5 L3.7 28.3 L9.6 24 L14 25.6 L19.6 26.8 L24.9 21.3 L33.6 27.3 L37 30 L37 36Z" fill="#17365f"/><path d="M11 14.4 L9.6 16.6 L10.6 18.6 L12 23.4 L14.3 25.6 L19.6 26.8 L22.4 23.5 L23.2 20.4 L23.7 15 L21 11.6 L14.3 12.6Z" fill="#e9edf3"/><path d="M19.8 26.7 L22.4 23.5 L23.2 20.6 L20.6 22.2 L18.6 24.6 L16.5 26Z" fill="#c3cfdf"/><path d="M9.9 15.4 C9.4 11.8 12.4 8.6 17 7.3 C20 6.5 23.4 6.2 23.7 6.9 C23.4 8.6 22.4 9.8 20.4 10.6 C17.4 11.6 13.4 11.8 12 13.2 C11.2 14 10.7 15 10.4 15.8Z" fill="#17365f"/><ellipse cx="18.4" cy="16.7" rx="1" ry="1.2" fill="#1d3d68"/><ellipse cx="15" cy="15.7" rx=".7" ry=".5" fill="#50627f"/><path d="M15.9 19.7q1.3 1 2.6.1" fill="none" stroke="#b9a9ad" stroke-width=".7"/><g fill="#5f7ba3"><circle cx="9.2" cy="29.5" r=".55"/><circle cx="12" cy="27.8" r=".5"/><circle cx="19.8" cy="29.8" r=".6"/><circle cx="27" cy="26.3" r=".55"/><circle cx="14.6" cy="33" r=".5"/><circle cx="26.6" cy="32.6" r=".5"/><circle cx="29.6" cy="29" r=".45"/></g></g></svg><span class="c4">swantest2</span><span class="c5">swantest2@chequer.io</span><span class="c6">Owner</span><span class="c7">Admin</span></div>
<div class="tr" style="top:1200px"><span class="c1">42</span><span class="c2">2024-07-09 15:41:59</span><span class="c3">Admin Role Granted</span><svg class="av" viewBox="0 0 36 36" width="36" height="36"><g clip-path="url(#sq)"><rect width="36" height="36" fill="#7f9cc2"/><path d="M-1 36 L-1 31.5 L3.7 28.3 L9.6 24 L14 25.6 L19.6 26.8 L24.9 21.3 L33.6 27.3 L37 30 L37 36Z" fill="#17365f"/><path d="M11 14.4 L9.6 16.6 L10.6 18.6 L12 23.4 L14.3 25.6 L19.6 26.8 L22.4 23.5 L23.2 20.4 L23.7 15 L21 11.6 L14.3 12.6Z" fill="#e9edf3"/><path d="M19.8 26.7 L22.4 23.5 L23.2 20.6 L20.6 22.2 L18.6 24.6 L16.5 26Z" fill="#c3cfdf"/><path d="M9.9 15.4 C9.4 11.8 12.4 8.6 17 7.3 C20 6.5 23.4 6.2 23.7 6.9 C23.4 8.6 22.4 9.8 20.4 10.6 C17.4 11.6 13.4 11.8 12 13.2 C11.2 14 10.7 15 10.4 15.8Z" fill="#17365f"/><ellipse cx="18.4" cy="16.7" rx="1" ry="1.2" fill="#1d3d68"/><ellipse cx="15" cy="15.7" rx=".7" ry=".5" fill="#50627f"/><path d="M15.9 19.7q1.3 1 2.6.1" fill="none" stroke="#b9a9ad" stroke-width=".7"/><g fill="#5f7ba3"><circle cx="9.2" cy="29.5" r=".55"/><circle cx="12" cy="27.8" r=".5"/><circle cx="19.8" cy="29.8" r=".6"/><circle cx="27" cy="26.3" r=".55"/><circle cx="14.6" cy="33" r=".5"/><circle cx="26.6" cy="32.6" r=".5"/><circle cx="29.6" cy="29" r=".45"/></g></g></svg><span class="c4">Mason Oh</span><span class="c5">mason@chequer.io</span><span class="c6">Owner</span><span class="c7">Admin</span></div>
<div class="tr" style="top:1280px"><span class="c1">41</span><span class="c2">2024-07-09 14:16:12</span><span class="c3">Admin Role Granted</span><svg class="av" viewBox="0 0 36 36" width="36" height="36"><g clip-path="url(#sq)"><rect width="36" height="36" fill="#7f9cc2"/><path d="M-1 36 L-1 31.5 L3.7 28.3 L9.6 24 L14 25.6 L19.6 26.8 L24.9 21.3 L33.6 27.3 L37 30 L37 36Z" fill="#17365f"/><path d="M11 14.4 L9.6 16.6 L10.6 18.6 L12 23.4 L14.3 25.6 L19.6 26.8 L22.4 23.5 L23.2 20.4 L23.7 15 L21 11.6 L14.3 12.6Z" fill="#e9edf3"/><path d="M19.8 26.7 L22.4 23.5 L23.2 20.6 L20.6 22.2 L18.6 24.6 L16.5 26Z" fill="#c3cfdf"/><path d="M9.9 15.4 C9.4 11.8 12.4 8.6 17 7.3 C20 6.5 23.4 6.2 23.7 6.9 C23.4 8.6 22.4 9.8 20.4 10.6 C17.4 11.6 13.4 11.8 12 13.2 C11.2 14 10.7 15 10.4 15.8Z" fill="#17365f"/><ellipse cx="18.4" cy="16.7" rx="1" ry="1.2" fill="#1d3d68"/><ellipse cx="15" cy="15.7" rx=".7" ry=".5" fill="#50627f"/><path d="M15.9 19.7q1.3 1 2.6.1" fill="none" stroke="#b9a9ad" stroke-width=".7"/><g fill="#5f7ba3"><circle cx="9.2" cy="29.5" r=".55"/><circle cx="12" cy="27.8" r=".5"/><circle cx="19.8" cy="29.8" r=".6"/><circle cx="27" cy="26.3" r=".55"/><circle cx="14.6" cy="33" r=".5"/><circle cx="26.6" cy="32.6" r=".5"/><circle cx="29.6" cy="29" r=".45"/></g></g></svg><span class="c4">morris</span><span class="c5">morris@chequer.io</span><span class="c6">Owner</span><span class="c7">Admin</span></div>
<div class="tr" style="top:1360px"><span class="c1">40</span><span class="c2">2024-07-09 13:25:03</span><span class="c3">Admin Role Revoked</span><svg class="av" viewBox="0 0 36 36" width="36" height="36"><g clip-path="url(#sq)"><rect width="36" height="36" fill="#7f9cc2"/><path d="M-1 36 L-1 31.5 L3.7 28.3 L9.6 24 L14 25.6 L19.6 26.8 L24.9 21.3 L33.6 27.3 L37 30 L37 36Z" fill="#17365f"/><path d="M11 14.4 L9.6 16.6 L10.6 18.6 L12 23.4 L14.3 25.6 L19.6 26.8 L22.4 23.5 L23.2 20.4 L23.7 15 L21 11.6 L14.3 12.6Z" fill="#e9edf3"/><path d="M19.8 26.7 L22.4 23.5 L23.2 20.6 L20.6 22.2 L18.6 24.6 L16.5 26Z" fill="#c3cfdf"/><path d="M9.9 15.4 C9.4 11.8 12.4 8.6 17 7.3 C20 6.5 23.4 6.2 23.7 6.9 C23.4 8.6 22.4 9.8 20.4 10.6 C17.4 11.6 13.4 11.8 12 13.2 C11.2 14 10.7 15 10.4 15.8Z" fill="#17365f"/><ellipse cx="18.4" cy="16.7" rx="1" ry="1.2" fill="#1d3d68"/><ellipse cx="15" cy="15.7" rx=".7" ry=".5" fill="#50627f"/><path d="M15.9 19.7q1.3 1 2.6.1" fill="none" stroke="#b9a9ad" stroke-width=".7"/><g fill="#5f7ba3"><circle cx="9.2" cy="29.5" r=".55"/><circle cx="12" cy="27.8" r=".5"/><circle cx="19.8" cy="29.8" r=".6"/><circle cx="27" cy="26.3" r=".55"/><circle cx="14.6" cy="33" r=".5"/><circle cx="26.6" cy="32.6" r=".5"/><circle cx="29.6" cy="29" r=".45"/></g></g></svg><span class="c4">Daniel Son</span><span class="c5">daniel@chequer.io</span><span class="c6">Database Admin</span><span class="c7">Daniel Son</span></div>
<div id="sbar"><div id="thumb"></div></div>
<div id="tf"><span class="cnt">1 - 50 of 56</span><svg class="abs" style="left:2302px;top:26px" width="18" height="26" viewBox="0 0 18 26" fill="none" stroke="#aeb4bb" stroke-width="2.1" stroke-linecap="butt" stroke-linejoin="miter"><path d="M14.6 2.8 4 12.4l10.6 9.6"/></svg><div id="pg1">1</div><div id="pg2">2</div><svg class="abs" style="left:2448px;top:26px" width="18" height="26" viewBox="0 0 18 26" fill="none" stroke="#4a5059" stroke-width="2.1" stroke-linecap="butt" stroke-linejoin="miter"><path d="M3.4 2.8 14 12.4 3.4 22"/></svg></div></div>
<div id="stat"><svg class="abs" style="left:2479px;top:11px" width="26" height="26" viewBox="0 0 26 26" fill="none" stroke="#4a5059" stroke-width="1.7"><circle cx="13" cy="13" r="11.5"/><ellipse cx="13" cy="13" rx="5" ry="11.5"/><path d="M1.5 13h23"/></svg><span style="left:2517px">Asia/Seoul (GMT+09:00)</span><span style="left:2780px">QueryPie 10.0.0 (20240722-182828)</span></div>
<svg class="corner" style="left:0" viewBox="0 0 24 16"><path d="M0 4.6A24.5 24.5 0 0 0 20.5 16H0Z" fill="#0e1512"/></svg>
<svg class="corner" style="right:0" viewBox="0 0 24 16"><path d="M24 7.6A24.5 24.5 0 0 1 5 16H24Z" fill="#0b0b0b"/></svg>
</div></body></html>
